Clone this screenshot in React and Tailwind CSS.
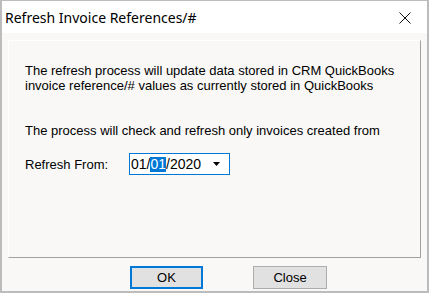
export default function App() {
  return (
    <div className="w-[429px] h-[293px] flex flex-col bg-[#f9f8f7] border-t border-x-2 border-b-2 border-[#bcbcbc] text-black" style={{ fontFamily: '"Liberation Sans", Arial, sans-serif' }}>
      <div className="h-[32px] bg-white flex items-center justify-between pl-[3px] pr-[16px] shrink-0">
        <span className="text-[14px] leading-none mt-[1px]" style={{ fontFamily: '"Noto Sans", "Open Sans", sans-serif' }}>Refresh Invoice References/#</span>
        <svg width="12" height="12" viewBox="0 0 12 12" className="mt-[2px]">
          <path d="M0.5 0.5 L11.5 11.5 M11.5 0.5 L0.5 11.5" stroke="#111" strokeWidth="1" fill="none" />
        </svg>
      </div>
      <div className="flex-1 flex flex-col px-[6px] pt-[7px]">
        <div className="h-[218px] border-t border-l border-white border-r border-b border-r-[#a0a0a0] border-b-[#a0a0a0] pl-[16px] pt-[22px] text-[13px] leading-[15px]">
          <p>The refresh process will update data stored in CRM QuickBooks</p>
          <p>invoice reference/# values as currently stored in QuickBooks</p>
          <p className="mt-[30px]">The process will check and refresh only invoices created from</p>
          <div className="flex items-center mt-[15px]">
            <span className="w-[104px]">Refresh From:</span>
            <div className="w-[101px] h-[22px] border border-[#0078d7] bg-white flex items-center pl-[1px] pr-[9px] text-[14px]">
              <span>01/</span>
              <span className="bg-[#0078d7] text-white">01</span>
              <span>/2020</span>
              <svg width="7" height="4" viewBox="0 0 7 4" className="ml-auto">
                <path d="M0 0 H7 L3.5 4 Z" fill="#000" />
              </svg>
            </div>
          </div>
        </div>
        <div className="flex mt-[8px] pl-[122px] gap-[50px]">
          <button className="w-[73px] h-[23px] border-2 border-[#0078d7] bg-[#e1e1e1] text-[13px] flex items-center justify-center">OK</button>
          <button className="w-[74px] h-[23px] border border-[#adadad] bg-[#e1e1e1] text-[13px] flex items-center justify-center">Close</button>
        </div>
      </div>
    </div>
  )
}
